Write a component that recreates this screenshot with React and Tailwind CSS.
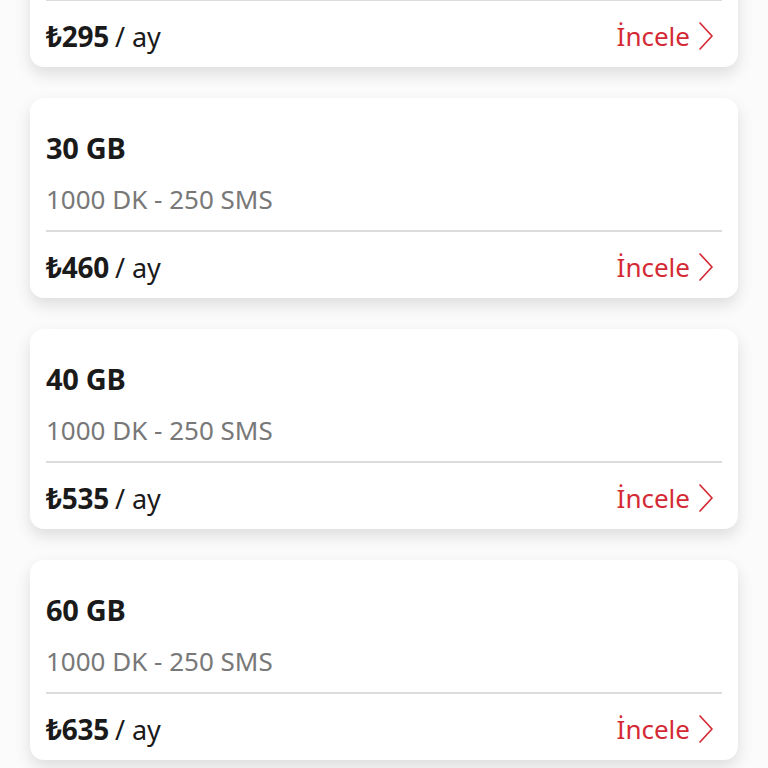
import React from 'react';

const plans = [
  { gb: '20 GB', price: '295' },
  { gb: '30 GB', price: '460' },
  { gb: '40 GB', price: '535' },
  { gb: '60 GB', price: '635' },
];

const Chevron = () => (
  <svg width="16" height="30" viewBox="0 0 16 30" fill="none" className="ml-[8px]">
    <path d="M2 2 L14 15 L2 28" stroke="#d42a35" strokeWidth="1.7" strokeLinecap="round" strokeLinejoin="round" />
  </svg>
);

const PlanCard = ({ gb, price }) => (
  <div className="bg-white rounded-[14px] shadow-[0_7px_16px_rgba(0,0,0,0.12)] h-[200px] flex flex-col px-4">
    <div className="pt-[30px] text-[29px] font-bold text-[#1a1a1a] leading-[40px] tracking-[-0.3px]">{gb}</div>
    <div className="mt-[15px] text-[26px] text-[#787878] leading-[32px]">1000 DK - 250 SMS</div>
    <div className="mt-[15px] border-t-2 border-[#dcdcdc]" />
    <div className="flex items-center justify-between h-[66px] pt-[4px]">
      <div className="text-[27px] text-[#1a1a1a] leading-[36px]">
        <span className="font-bold text-[28px] tracking-[-0.3px]">₺{price}</span>
        <span className="ml-[6px]">/ ay</span>
      </div>
      <div className="flex items-center text-[26px] text-[#d42a35] leading-[36px] mr-[8px]">
        İncele
        <Chevron />
      </div>
    </div>
  </div>
);

export default function App() {
  return (
    <div className="w-[768px] h-[768px] overflow-hidden bg-[#fbfbfb]" style={{ fontFamily: '"Noto Sans", sans-serif' }}>
      <div className="-mt-[133px] px-[30px] flex flex-col gap-[31px]">
        {plans.map((p) => (
          <PlanCard key={p.gb} gb={p.gb} price={p.price} />
        ))}
      </div>
    </div>
  );
}
